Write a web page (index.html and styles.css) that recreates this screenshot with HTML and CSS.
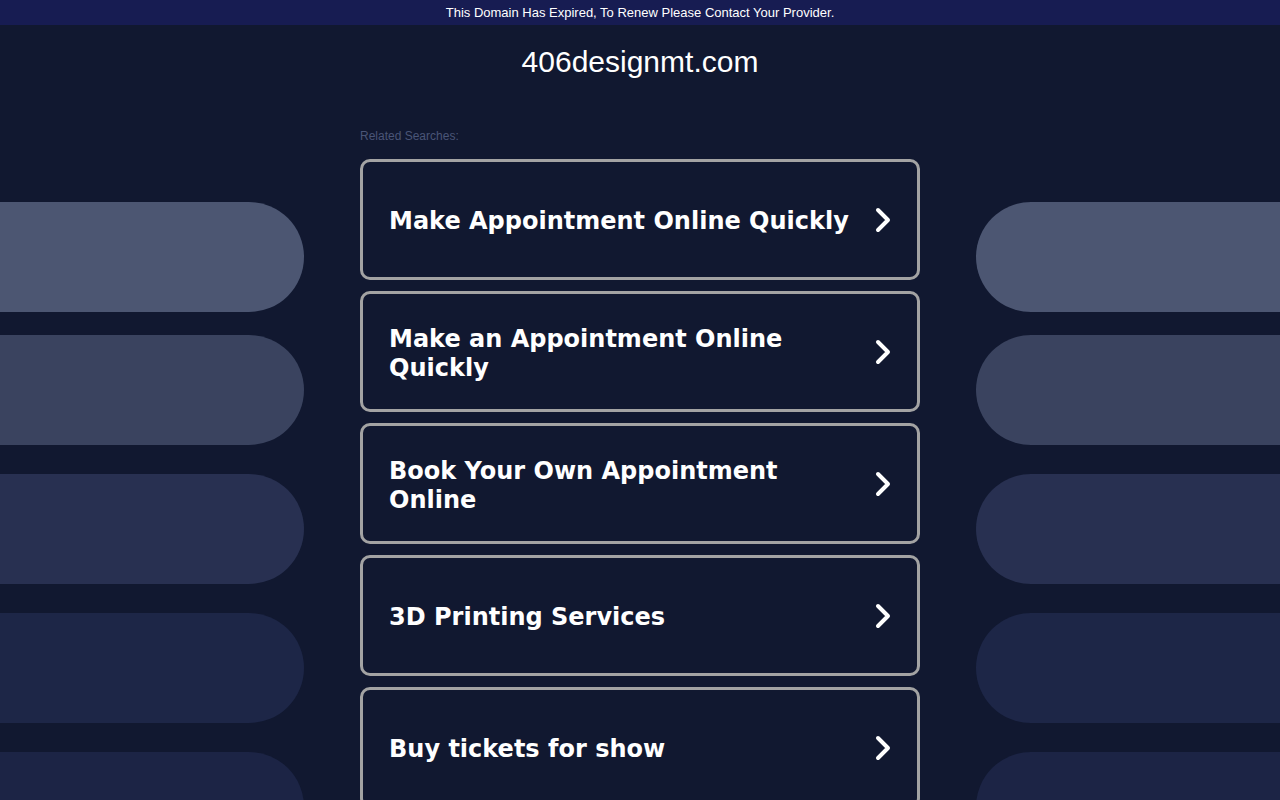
FILE: index.html
```html
<!DOCTYPE html>
<html>
<head>
  <meta charset="UTF-8">
  <title>406designmt.com</title>
  <link rel="stylesheet" href="styles.css">
</head>
<body>
  <div class="backdrop">
    <div class="pills pills-left">
      <div class="pill p1"></div>
      <div class="pill p2"></div>
      <div class="pill p3"></div>
      <div class="pill p4"></div>
      <div class="pill p5"></div>
    </div>
    <div class="pills pills-right">
      <div class="pill p1"></div>
      <div class="pill p2"></div>
      <div class="pill p3"></div>
      <div class="pill p4"></div>
      <div class="pill p5"></div>
    </div>
  </div>

  <div class="notice">This Domain Has Expired, To Renew Please Contact Your Provider.</div>

  <div class="page">
    <h1 class="domain">406designmt.com</h1>
    <div class="related">
      <div class="related-title">Related Searches:</div>
      <a class="search" href="#">
        <span class="label">Make Appointment Online Quickly</span>
        <svg class="arrow" viewBox="0 0 18 28" width="18" height="28"><path d="M4 4 L14 14 L4 24" fill="none" stroke="#fff" stroke-width="4" stroke-linecap="round" stroke-linejoin="round"/></svg>
      </a>
      <a class="search" href="#">
        <span class="label">Make an Appointment Online Quickly</span>
        <svg class="arrow" viewBox="0 0 18 28" width="18" height="28"><path d="M4 4 L14 14 L4 24" fill="none" stroke="#fff" stroke-width="4" stroke-linecap="round" stroke-linejoin="round"/></svg>
      </a>
      <a class="search" href="#">
        <span class="label">Book Your Own Appointment Online</span>
        <svg class="arrow" viewBox="0 0 18 28" width="18" height="28"><path d="M4 4 L14 14 L4 24" fill="none" stroke="#fff" stroke-width="4" stroke-linecap="round" stroke-linejoin="round"/></svg>
      </a>
      <a class="search" href="#">
        <span class="label">3D Printing Services</span>
        <svg class="arrow" viewBox="0 0 18 28" width="18" height="28"><path d="M4 4 L14 14 L4 24" fill="none" stroke="#fff" stroke-width="4" stroke-linecap="round" stroke-linejoin="round"/></svg>
      </a>
      <a class="search" href="#">
        <span class="label">Buy tickets for show</span>
        <svg class="arrow" viewBox="0 0 18 28" width="18" height="28"><path d="M4 4 L14 14 L4 24" fill="none" stroke="#fff" stroke-width="4" stroke-linecap="round" stroke-linejoin="round"/></svg>
      </a>
    </div>
  </div>
</body>
</html>
```

FILE: styles.css
```css
html, body {
  margin: 0;
  padding: 0;
}
body {
  background: #111830;
  font-family: "Liberation Sans", Arial, sans-serif;
  color: #fff;
  height: 800px;
  overflow: hidden;
}

/* decorative pills behind the page */
.backdrop {
  position: absolute;
  top: 0;
  left: 0;
  width: 1280px;
  height: 800px;
  display: flex;
  justify-content: space-between;
  padding-top: 202px;
  box-sizing: border-box;
  overflow: hidden;
  z-index: 0;
}
.pills {
  display: flex;
  flex-direction: column;
  width: 304px;
}
.pill {
  flex: none;
  height: 110px;
  margin-bottom: 29px;
}
.pill.p1 {
  margin-bottom: 23px;
  background: #4c5672;
}
.pill.p2 { background: #3a435f; }
.pill.p3 { background: #283051; }
.pill.p4 { background: #1d2647; }
.pill.p5 { background: #1c2445; }
.pills-left .pill {
  border-radius: 0 55px 55px 0;
}
.pills-right .pill {
  border-radius: 55px 0 0 55px;
}

.notice {
  position: relative;
  z-index: 1;
  background: #171c52;
  height: 25px;
  line-height: 25px;
  font-size: 13px;
  text-align: center;
}

.page {
  position: relative;
  z-index: 1;
  width: 560px;
  margin: 0 auto;
}
.domain {
  margin: 0;
  padding-top: 21px;
  height: 53px;
  line-height: 32px;
  font-weight: normal;
  font-size: 30px;
  text-align: center;
}
.related {
  padding-top: 30px;
}
.related-title {
  font-size: 12px;
  color: #4a5577;
  margin-bottom: 16px;
}
.search {
  display: flex;
  align-items: center;
  justify-content: space-between;
  height: 115px;
  border: 3px solid #a3a3a3;
  border-radius: 10px;
  margin-bottom: 11px;
  padding: 0 25px 0 26px;
  text-decoration: none;
  color: #fff;
}
.label {
  font-family: "DejaVu Sans", Verdana, sans-serif;
  font-weight: bold;
  font-size: 24px;
  line-height: 29px;
  padding-top: 4px;
  max-width: 470px;
}
.arrow {
  flex: none;
}
```
